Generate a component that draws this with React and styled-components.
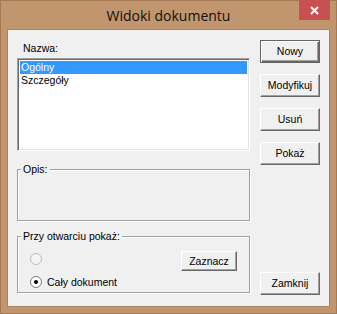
import React from "react";
import styled, { createGlobalStyle } from "styled-components";

const Global = createGlobalStyle`
  html, body { margin: 0; padding: 0; background: #c1956e; }
  * { box-sizing: border-box; }
`;

const Window = styled.div`
  width: 337px;
  height: 314px;
  display: flex;
  flex-direction: column;
  background: #c1956e;
  border: 1px solid #a47a55;
  padding: 0 6px 6px 6px;
`;

const TitleBar = styled.div`
  height: 29px;
  display: grid;
  grid-template-columns: 1fr auto 1fr;
  align-items: start;
`;

const Title = styled.div`
  grid-column: 2;
  font-family: "Open Sans", "Noto Sans", sans-serif;
  font-size: 14px;
  line-height: 19px;
  padding-top: 5px;
  color: #111;
  white-space: nowrap;
`;

const CloseButton = styled.div`
  grid-column: 3;
  justify-self: end;
  width: 31px;
  height: 20px;
  margin-top: -1px;
  background: #c75050;
  display: flex;
  align-items: center;
  justify-content: center;
`;

const Client = styled.div`
  flex: 1;
  display: flex;
  background: #f0f0f0;
  border: 1px solid #a98260;
  padding: 10px 9px 0 9px;
  gap: 10px;
  font-family: "Liberation Sans", Arial, sans-serif;
  font-size: 10.5px;
  color: #000;
`;

const LeftColumn = styled.div`
  width: 233px;
  display: flex;
  flex-direction: column;
  padding-bottom: 13px;
`;

const RightColumn = styled.div`
  width: 60px;
  display: flex;
  flex-direction: column;
  gap: 11px;
  padding-bottom: 11px;
`;

const Label = styled.div`
  line-height: 13px;
  margin: 2px 0 0 6px;
`;

const ListBox = styled.div`
  margin-top: 3px;
  height: 93px;
  background: #fff;
  border: 1px solid;
  border-color: #a0a0a0 #fff #fff #a0a0a0;
  box-shadow: inset 1px 1px 0 #696969, inset -1px -1px 0 #e3e3e3;
  padding: 2px 2px;
`;

const ListItem = styled.div`
  height: 13px;
  line-height: 13px;
  padding-left: 1px;
  background: ${(p) => (p.$selected ? "#3399ff" : "transparent")};
  color: ${(p) => (p.$selected ? "#fff" : "#000")};
`;

const Group = styled.div`
  position: relative;
  margin-top: ${(p) => p.$mt}px;
  height: ${(p) => p.$h}px;
  border: 1px solid #a0a0a0;
  box-shadow: 1px 1px 0 #fff, inset 1px 1px 0 #fff;
`;

const GroupLabel = styled.span`
  position: absolute;
  top: -7px;
  left: 3px;
  padding: 0 2px;
  line-height: 13px;
  background: #f0f0f0;
`;

const GroupBody = styled.div`
  display: flex;
  align-items: flex-start;
  padding: 14px 12px 0 12px;
`;

const RadioList = styled.div`
  flex: 1;
  display: flex;
  flex-direction: column;
  gap: 11px;
  margin-top: 2px;
`;

const RadioRow = styled.div`
  display: flex;
  align-items: center;
  gap: 5px;
  height: 12px;
  line-height: 13px;
`;

const RadioCircle = styled.span`
  width: 12px;
  height: 12px;
  border-radius: 50%;
  border: 1px solid ${(p) => (p.$disabled ? "#bcbcbc" : "#7a7a7a")};
  background: ${(p) => (p.$disabled ? "#f4f4f4" : "#fff")};
  display: flex;
  align-items: center;
  justify-content: center;
  &::after {
    content: "";
    display: ${(p) => (p.$checked ? "block" : "none")};
    width: 4px;
    height: 4px;
    border-radius: 50%;
    background: #000;
  }
`;

const Button = styled.div`
  height: ${(p) => p.$h || 23}px;
  width: ${(p) => p.$w || 60}px;
  display: flex;
  align-items: center;
  justify-content: center;
  background: #f0f0f0;
  border: 1px solid;
  border-color: ${(p) =>
    p.$default ? "#646464" : "#fff #696969 #696969 #fff"};
  box-shadow: ${(p) =>
    p.$default
      ? "inset 1px 1px 0 #fff, inset -1px -1px 0 #696969, inset -2px -2px 0 #a0a0a0"
      : "inset -1px -1px 0 #a0a0a0"};
  line-height: 13px;
  white-space: nowrap;
  margin-top: ${(p) => (p.$bottom ? "auto" : "0")};
`;

export default function App() {
  return (
    <>
      <Global />
      <Window>
        <TitleBar>
          <Title>Widoki dokumentu</Title>
          <CloseButton>
            <svg width="9" height="9" viewBox="0 0 9 9">
              <path d="M1 1 L8 8 M8 1 L1 8" stroke="#fff" strokeWidth="2" />
            </svg>
          </CloseButton>
        </TitleBar>
        <Client>
          <LeftColumn>
            <Label>Nazwa:</Label>
            <ListBox>
              <ListItem $selected>Ogólny</ListItem>
              <ListItem>Szczegóły</ListItem>
            </ListBox>
            <Group $mt={18} $h={52}>
              <GroupLabel>Opis:</GroupLabel>
            </Group>
            <Group $mt={15} $h={57}>
              <GroupLabel>Przy otwarciu pokaż:</GroupLabel>
              <GroupBody>
                <RadioList>
                  <RadioRow>
                    <RadioCircle $disabled />
                  </RadioRow>
                  <RadioRow>
                    <RadioCircle $checked />
                    <span>Cały dokument</span>
                  </RadioRow>
                </RadioList>
                <Button $w={56} $h={20}>Zaznacz</Button>
              </GroupBody>
            </Group>
          </LeftColumn>
          <RightColumn>
            <Button $default>Nowy</Button>
            <Button>Modyfikuj</Button>
            <Button>Usuń</Button>
            <Button>Pokaż</Button>
            <Button $bottom>Zamknij</Button>
          </RightColumn>
        </Client>
      </Window>
    </>
  );
}
